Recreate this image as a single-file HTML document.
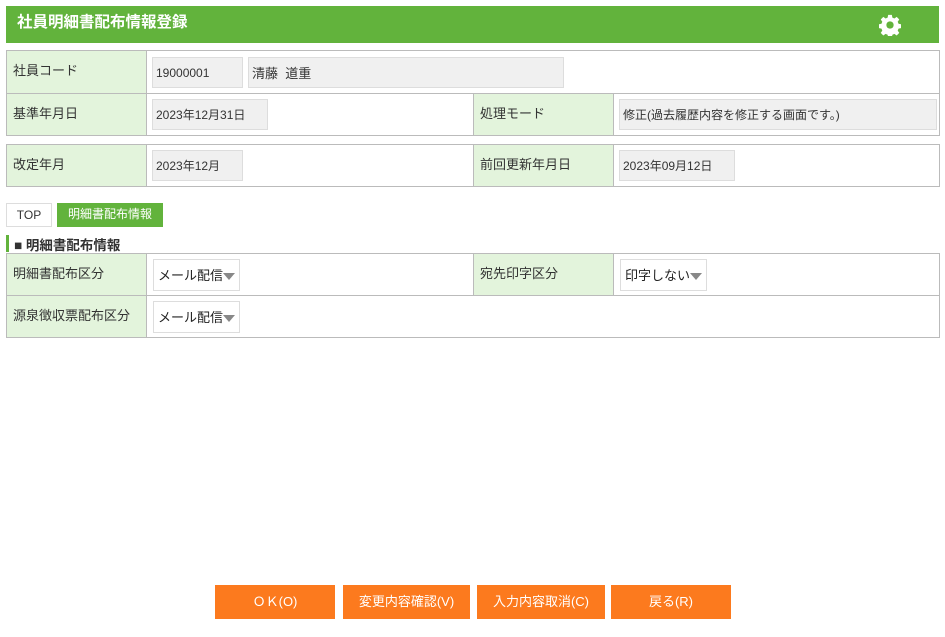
<!DOCTYPE html>
<html><head><meta charset="utf-8"><style>
*{box-sizing:border-box;margin:0;padding:0}
body{width:945px;height:637px;background:#fff;font-family:"Liberation Sans","Noto Sans CJK JP",sans-serif;font-size:13px;color:#333;position:relative;overflow:hidden}
.a{position:absolute}
.hd{left:6px;top:6px;width:933px;height:37px;background:#62b33c;color:#fff;font-weight:bold;font-size:15.5px;line-height:34px;padding-left:11px}
.lab{background:#e3f4dc;border:1px solid #bbb;padding:9px 6px;font-size:13px}
.cell{border:1px solid #bbb;background:#fff}
.box{background:#f0f0f0;border:1px solid #ddd;height:31px;line-height:31px;padding-left:3px;font-size:12px}
.sel{background:#fff;border:1px solid #ddd;height:32px;line-height:31px;padding-left:4px;font-size:13px;color:#222}
.sel:after{content:"";position:absolute;right:4px;top:13px;border-left:6px solid transparent;border-right:6px solid transparent;border-top:7px solid #888}
.btn{background:#fc7a1e;color:#fff;height:34px;line-height:34px;text-align:center;font-size:13px;top:585px}
</style></head><body>
<div class="a hd">社員明細書配布情報登録</div>
<svg class="a" style="left:879px;top:14px" width="22" height="22" viewBox="0 0 24 24"><path fill="#fff" d="M10 1h4l.6 3 2.2.9 2.5-1.7 2.8 2.8-1.7 2.5.9 2.2 3 .6v4l-3 .6-.9 2.2 1.7 2.5-2.8 2.8-2.5-1.7-2.2.9-.6 3h-4l-.6-3-2.200-.9-2.5 1.7-2.8-2.8 1.7-2.5-.9-2.2-3-.6v-4l3-.6.9-2.2-1.7-2.5 2.8-2.8 2.5 1.7 2.2-.9z"/><circle cx="12" cy="12" r="4" fill="#62b33c"/></svg>

<div class="a lab" style="left:6px;top:50px;width:141px;height:44px">社員コード</div>
<div class="a cell" style="left:146px;top:50px;width:794px;height:44px"></div>
<div class="a box" style="left:152px;top:57px;width:91px">19000001</div>
<div class="a box" style="left:248px;top:57px;width:316px;font-size:13px">清藤&nbsp; 道重</div>

<div class="a lab" style="left:6px;top:93px;width:141px;height:43px">基準年月日</div>
<div class="a cell" style="left:146px;top:93px;width:328px;height:43px"></div>
<div class="a box" style="left:152px;top:99px;width:116px">2023年12月31日</div>
<div class="a lab" style="left:473px;top:93px;width:141px;height:43px">処理モード</div>
<div class="a cell" style="left:613px;top:93px;width:327px;height:43px"></div>
<div class="a box" style="left:619px;top:99px;width:318px">修正(過去履歴内容を修正する画面です。)</div>

<div class="a lab" style="left:6px;top:144px;width:141px;height:43px">改定年月</div>
<div class="a cell" style="left:146px;top:144px;width:328px;height:43px"></div>
<div class="a box" style="left:152px;top:150px;width:91px">2023年12月</div>
<div class="a lab" style="left:473px;top:144px;width:141px;height:43px">前回更新年月日</div>
<div class="a cell" style="left:613px;top:144px;width:327px;height:43px"></div>
<div class="a box" style="left:619px;top:150px;width:116px">2023年09月12日</div>

<div class="a" style="left:6px;top:203px;width:46px;height:24px;border:1px solid #ddd;text-align:center;line-height:22px;font-size:12px">TOP</div>
<div class="a" style="left:57px;top:203px;width:106px;height:24px;background:#62b33c;color:#fff;text-align:center;line-height:22px;font-size:12px">明細書配布情報</div>
<div class="a" style="left:6px;top:235px;width:3px;height:17px;background:#62b33c"></div>
<div class="a" style="left:14px;top:234px;font-weight:bold;font-size:13.5px;color:#333">■ 明細書配布情報</div>

<div class="a lab" style="left:6px;top:253px;width:141px;height:43px">明細書配布区分</div>
<div class="a cell" style="left:146px;top:253px;width:328px;height:43px"></div>
<div class="a sel" style="left:153px;top:259px;width:87px">メール配信</div>
<div class="a lab" style="left:473px;top:253px;width:141px;height:43px">宛先印字区分</div>
<div class="a cell" style="left:613px;top:253px;width:327px;height:43px"></div>
<div class="a sel" style="left:620px;top:259px;width:87px">印字しない</div>

<div class="a lab" style="left:6px;top:295px;width:141px;height:43px">源泉徴収票配布区分</div>
<div class="a cell" style="left:146px;top:295px;width:794px;height:43px"></div>
<div class="a sel" style="left:153px;top:301px;width:87px">メール配信</div>

<div class="a btn" style="left:215px;width:120px">ＯＫ(O)</div>
<div class="a btn" style="left:343px;width:127px">変更内容確認(V)</div>
<div class="a btn" style="left:477px;width:128px">入力内容取消(C)</div>
<div class="a btn" style="left:611px;width:120px">戻る(R)</div>
</body></html>
